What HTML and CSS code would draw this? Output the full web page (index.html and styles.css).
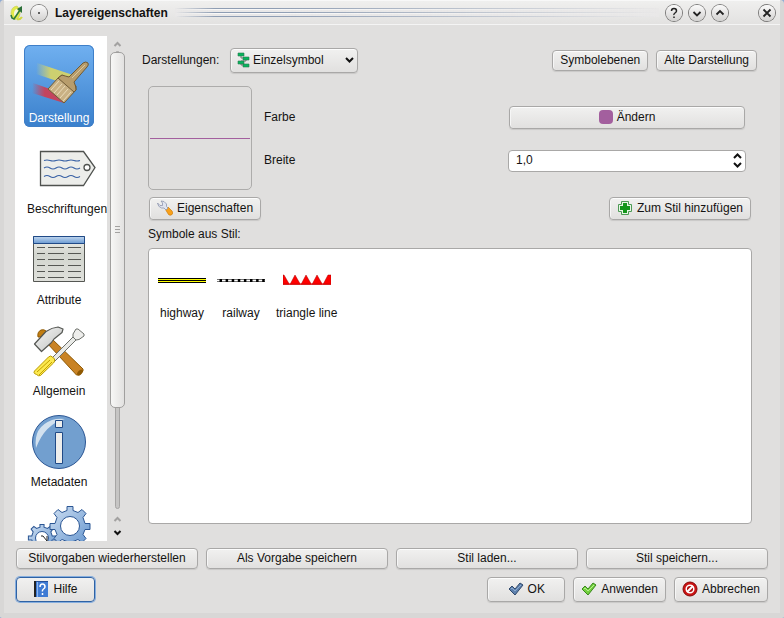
FILE: index.html
```html
<!DOCTYPE html>
<html lang="de">
<head>
<meta charset="utf-8">
<title>Layereigenschaften</title>
<link rel="stylesheet" href="styles.css">
</head>
<body>
<div class="window">
  <header class="titlebar">
    <svg class="app-icon" viewBox="0 0 14 16" aria-hidden="true"><path d="M7 1Q1 2 1 8q0 6 4 6.500Q9 14 10 9q1-5-3-8z" fill="#e3ea4a" stroke="#c3cc58" stroke-width=".600"/><path d="M6.500 4Q4 5 4 8.500q0 3 1.500 3Q8 10 8 7 8 4 6.500 4z" fill="#f4f6e0"/><path d="M7 14q3 1 5-2" fill="none" stroke="#d0d840" stroke-width="2"/><path d="M1 10l1 3 2 1L10 5" fill="none" stroke="#2f7a3c" stroke-width="1.600"/><path d="M7 4l5-3v7z" fill="#2c7038"/></svg>
    <button class="round" aria-label="Fenstermenü"><svg viewBox="0 0 16 16"><circle cx="8" cy="8" r="1" fill="#333"/></svg></button>
    <h1>Layereigenschaften</h1>
    <div class="stripes"></div>
    <button class="round" aria-label="Kontexthilfe"><svg viewBox="0 0 16 16"><path d="M5.500 6q0-2.500 2.500-2.500T10.500 6q0 1-1.500 2T8 10M8 11.500v1.500" fill="none" stroke="#222" stroke-width="1.500"/></svg></button>
    <button class="round" aria-label="Minimieren"><svg viewBox="0 0 16 16"><path d="M4.500 7L8 10.500 11.500 7" fill="none" stroke="#222" stroke-width="1.800"/></svg></button>
    <button class="round" aria-label="Maximieren"><svg viewBox="0 0 16 16"><path d="M4.500 9.500L8 6l3.500 3.500" fill="none" stroke="#222" stroke-width="1.800"/></svg></button>
    <button class="round close" aria-label="Schließen"><svg viewBox="0 0 16 16"><path d="M4.500 4.500l7 7M11.500 4.500l-7 7" fill="none" stroke="#222" stroke-width="1.800"/></svg></button>
  </header>

  <div class="content">
    <nav class="pages">
      <button class="page selected">
        <svg viewBox="27 48 64 64" aria-hidden="true">
          <defs>
            <linearGradient id="yellow"><stop offset="0" stop-color="#d2d26a" stop-opacity="0"/><stop offset=".4" stop-color="#cdd070"/></linearGradient>
            <linearGradient id="red"><stop offset="0" stop-color="#c8405a" stop-opacity="0"/><stop offset=".4" stop-color="#c3445e"/></linearGradient>
          </defs>
          <path d="M37 63l36 12-10 8-27-9z" fill="url(#yellow)"/>
          <path d="M33 83l17 6 14 14-32-10z" fill="url(#red)"/>
          <path d="M58 78l4-3 14 11v4l-12 13-16-14z" fill="#c9b184" stroke="#6f5a35"/>
          <path d="M51 90l8-9M54 93l8-9M57 95l8-9M60 98l8-9M63 101l8-9" stroke="#eadbb9" fill="none"/>
          <path d="M58 78l4-3q3 1 7 2l14-14q3-2 5 0 1 2-1 4L74 82q2 4 2 8l-2 2z" fill="#b89d6c" stroke="#6f5a35"/>
          <path d="M72 78l13-13" stroke="#dcc79b" fill="none"/>
        </svg>
        <span>Darstellung</span>
      </button>
      <button class="page">
        <svg viewBox="36 139 64 64" aria-hidden="true">
          <path d="M41.500 151.500h43l11.500 16-11.500 18h-43z" fill="#ecedea" stroke="#4f524f" stroke-width="1.300"/>
          <circle cx="88" cy="167.500" r="3" fill="#fff" stroke="#4f524f" stroke-width="1.300"/>
          <g fill="none" stroke="#3a62a6" stroke-width="1.200"><path d="M45 160.500q3-1 6 0t6 0 6 0 6 0 6 0 6 0"/><path d="M45 168q3-2 6 0t6 0 6 0 6 0 6 0 6 0"/><path d="M45 176.500q3-2 6 0t6 0 6 0 6 0 6 0 6 0"/></g>
        </svg>
        <span>Beschriftungen</span>
      </button>
      <button class="page">
        <svg viewBox="27 230 64 64" aria-hidden="true">
          <defs><linearGradient id="sheet" x2="0" y2="1"><stop offset="0" stop-color="#eff0ec"/><stop offset=".4" stop-color="#d3d6cf"/><stop offset="1" stop-color="#dfe0db"/></linearGradient><linearGradient id="head" x2="0" y2="1"><stop offset="0" stop-color="#c2d7ee"/><stop offset="1" stop-color="#6a9ad2"/></linearGradient></defs>
          <path d="M33.500 236.500h51v45h-51z" fill="url(#sheet)" stroke="#555753"/>
          <path d="M33.500 236.500h51v7h-51z" fill="url(#head)" stroke="#204a87"/>
          <path d="M37 247.500h8m3 0h16m4 0h13M37 253.500h8m3 0h16m4 0h13M37 259.500h8m3 0h16m4 0h13M37 265.500h8m3 0h16m4 0h13M37 271.500h8m3 0h16m4 0h13M37 277.500h8m3 0h16m4 0h13" stroke="#555753" fill="none"/>
        </svg>
        <span>Attribute</span>
      </button>
      <button class="page">
        <svg viewBox="27 321 64 64" aria-hidden="true">
          <defs><linearGradient id="steel" x2="1" y2="1"><stop offset="0" stop-color="#f6f6f6"/><stop offset="1" stop-color="#bfc1bf"/></linearGradient></defs>
          <path d="M38 337q-1-5 3-7 3-1 5 1l-5 6z" fill="#c17d11" stroke="#8f5902"/>
          <path d="M47 343l29.500 32h3l3.500-4v-2L52 339z" fill="#c98325" stroke="#8f5902"/>
          <ellipse cx="80" cy="372.500" rx="3.500" ry="2" fill="#8f5902" transform="rotate(-45 80 372.500)"/>
          <path d="M34.500 344L46 331.500q6-4 12-4.500l5 2-1 3.500-8 6.500-3 4-9.500 8.500z" fill="url(#steel)" stroke="#555753" stroke-width="1.200" stroke-linejoin="round"/>
          <path d="M52 358l21-21 3 3-21 21z" fill="#e9eae7" stroke="#6d706b"/>
          <path d="M73 337v-3l3-5h2l6 5v2l-5 3.500-3 .500z" fill="#eeeeec" stroke="#6d706b" stroke-linejoin="round"/>
          <path d="M34.500 371l14-14q2-2 4 0l2 2q1 2-1 4l-13 12.500q-2 1-4-1l-2-1q-1-1 0-2.500z" fill="#fce94f" stroke="#b99a00"/>
          <path d="M37 372l13-12M39 375l13-13" stroke="#c4a000" fill="none"/>
        </svg>
        <span>Allgemein</span>
      </button>
      <button class="page">
        <svg viewBox="27 412 64 64" aria-hidden="true">
          <circle cx="59" cy="442" r="26.500" fill="#729fcf" stroke="#2b5694"/>
          <path d="M36 448q-3-21 16-28 6-2 13-1-20 5-29 29z" fill="#e3ecf5" opacity=".85"/>
          <path d="M55.500 420.500h7v7h-7zM55.500 432.500h7v31h-7z" fill="#eeeeec" stroke="#204a87"/>
        </svg>
        <span>Metadaten</span>
      </button>
      <button class="page">
        <svg viewBox="27 503 64 64" aria-hidden="true">
          <defs>
            <linearGradient id="gear" x2="1" y2="1"><stop offset="0" stop-color="#d0e0f2"/><stop offset="1" stop-color="#6394ce"/></linearGradient>
            <path id="cog" d="M-3-16l0-4h6l0 4 5 2 4-3 4 4-3 4 2 6 5 0v6l-5 0-2 5 3 4-4 4-4-3-5 2 0 5h-6l0-5-5-2-4 3-4-4 3-4-2-5-5 0v-6l5 0 2-6-3-4 4-4 4 3z"/>
          </defs>
          <g fill="url(#gear)" stroke="#2b5694"><use href="#cog" transform="translate(42 538) scale(.68)" stroke-width="1.500"/><use href="#cog" transform="translate(70 526.500)"/></g>
          <circle cx="42" cy="538" r="6.500" fill="#fff" stroke="#2b5694"/>
          <circle cx="70" cy="526" r="9.500" fill="#fff" stroke="#2b5694"/>
          <path d="M41 536h2l4 5v-5" fill="none" stroke="#222"/>
        </svg>
      </button>
    </nav>

    <div class="scrollbar" aria-hidden="true">
      <svg viewBox="0 0 9 6"><path d="M1.500 5l3-3 3 3" fill="none" stroke="#a3a2a1" stroke-width="2"/></svg>
      <div class="track"><div class="thumb"><i></i><i></i><i></i></div></div>
      <svg viewBox="0 0 9 6"><path d="M1.500 5l3-3 3 3" fill="none" stroke="#a3a2a1" stroke-width="2"/></svg>
      <svg class="down" viewBox="0 0 9 6"><path d="M1.500 1l3 3 3-3" fill="none" stroke="#111" stroke-width="2"/></svg>
    </div>

    <main>
      <div class="row renderer">
        <label for="renderer">Darstellungen:</label>
        <div class="combo">
          <svg class="i16" viewBox="0 0 16 16" aria-hidden="true"><path d="M5 3v3h5v3H5v4h5" fill="none" stroke="#777"/><path d="M2 1h6v3H2zM7 5h6v3H7zM2 9h6v3H2zM7 12h6v3H7z" fill="#08b45c" stroke="#287a50" stroke-width=".600"/></svg>
          <select id="renderer"><option>Einzelsymbol</option></select>
          <svg class="chevron" viewBox="0 0 9 6" aria-hidden="true"><path d="M1 1l3.500 3.500L8 1" fill="none" stroke="#111" stroke-width="2"/></svg>
        </div>
        <span class="spacer"></span>
        <button class="btn slim">Symbolebenen</button>
        <button class="btn slim">Alte Darstellung</button>
      </div>

      <div class="symbol">
        <div class="preview"><div class="line"></div></div>
        <div class="form">
          <label for="color">Farbe</label>
          <button class="btn" id="color"><span class="swatch"></span>Ändern</button>
          <label for="width">Breite</label>
          <div class="spin">
            <input id="width" type="text" inputmode="decimal" value="1,0">
            <div class="steps">
              <button aria-label="Erhöhen"><svg viewBox="0 0 9 6"><path d="M1 5l3.500-3.500L8 5" fill="none" stroke="#111" stroke-width="2"/></svg></button>
              <button aria-label="Verringern"><svg viewBox="0 0 9 6"><path d="M1 1l3.500 3.500L8 1" fill="none" stroke="#111" stroke-width="2"/></svg></button>
            </div>
          </div>
        </div>
      </div>

      <div class="row actions">
        <button class="btn"><svg class="i16" viewBox="0 0 16 16" aria-hidden="true"><path d="M8.500 9.500l2.500-2.500 4 4q1.500 2 0 3.500-2 1.500-3.500 0z" fill="#f9a11b" stroke="#cf7c0a" stroke-width=".700"/><path d="M4 1l3 .500 2.500 2.500v2.500L11 8 9 10 7 8H4.500Q1 7 .500 3L3 5.500h2.500V3z" fill="#dfe4f0" stroke="#8e96ad" stroke-width=".800"/></svg>Eigenschaften</button>
        <span class="spacer"></span>
        <button class="btn"><svg class="i16" viewBox="0 0 16 16" aria-hidden="true"><path d="M4.500 1.500h7v3h3v7h-3v3h-7v-3h-3v-7h3z" fill="#e8f5e6" stroke="#4d9a55"/><path d="M6 3h4v3h3v4h-3v3H6v-3H3V6h3z" fill="#14961c"/></svg>Zum Stil hinzufügen</button>
      </div>

      <h2>Symbole aus Stil:</h2>
      <ul class="styles">
        <li>
          <svg viewBox="0 0 48 48" aria-hidden="true"><path d="M0 22h48v5H0z" fill="#ffff00"/><path d="M0 22.500h48M0 24.500h48M0 26.500h48" stroke="#000"/></svg>
          <span>highway</span>
        </li>
        <li>
          <svg viewBox="0 0 48 48" aria-hidden="true"><path d="M0 23h48v3H0z" fill="#fff"/><path d="M0 23.500h48M0 25.500h48" stroke="#555" stroke-width=".800"/><path d="M2.500 24.500H48" stroke="#000" stroke-width="3" stroke-dasharray="2.500 3.600"/></svg>
          <span>railway</span>
        </li>
        <li>
          <svg viewBox="0 0 48 48" aria-hidden="true"><path d="M0 28.500V19h1l5.500 9.500zM7 28.500L12 19l5.500 9.500zM18 28.500L23 19l5.500 9.500zM29 28.500L34 19l5.500 9.500zM40 28.500L45 19h3v9.500z" fill="#f00" stroke="#a00" stroke-width=".500"/><path d="M0 28h48" stroke="#d00"/></svg>
          <span>triangle line</span>
        </li>
      </ul>
    </main>
  </div>

  <footer>
    <div class="style-buttons">
      <button class="btn slim">Stilvorgaben wiederherstellen</button>
      <button class="btn slim">Als Vorgabe speichern</button>
      <button class="btn slim">Stil laden...</button>
      <button class="btn slim">Stil speichern...</button>
    </div>
    <div class="row dialog-buttons">
      <button class="btn tall help"><svg class="i16" viewBox="0 0 16 16" aria-hidden="true"><path d="M1 0h2v16H1z" fill="#222"/><path d="M3 0h12v1H3z" fill="#24509a"/><path d="M3 1h12v15H3z" fill="#3f7bd4"/><path d="M4 1h1v15H4z" fill="#8cb7f2"/><path d="M7 6q0-3 2.500-3T12 6q0 1-1.500 2t-1 2.500M9.500 12v2" stroke="#fff" stroke-width="1.500" fill="none"/></svg>Hilfe</button>
      <span class="spacer"></span>
      <button class="btn tall ok"><svg class="i16" viewBox="0 0 16 16" aria-hidden="true"><path d="M1 8l3-3 3 3 5-6 3 2-8 10z" fill="#5d80ad" stroke="#30496b"/><path d="M3 8l1-1 3 3 6-6" fill="none" stroke="#8cabd0"/></svg>OK</button>
      <button class="btn tall"><svg class="i16" viewBox="0 0 16 16" aria-hidden="true"><path d="M1 8l3-3 3 3 5-6 3 2-8 10z" fill="#73cf3e" stroke="#39881c"/><path d="M3 8l1-1 3 3 6-6" fill="none" stroke="#b6f08d"/></svg>Anwenden</button>
      <button class="btn tall"><svg class="i16" viewBox="0 0 16 16" aria-hidden="true"><circle cx="8" cy="8" r="7" fill="#cc1414" stroke="#870808"/><circle cx="8" cy="8" r="3.800" fill="#b01010" stroke="#fff" stroke-width="1.500"/><path d="M5 11l6-6" stroke="#fff" stroke-width="2"/></svg>Abbrechen</button>
    </div>
  </footer>
</div>
</body>
</html>
```
FILE: styles.css
```css
* { box-sizing: border-box; }

body {
  margin: 0;
  background: #8fabd4;
  color: #141312;
  font: 12px/16px "Liberation Sans", Arial, sans-serif;
}

button, input, select { font: inherit; color: inherit; }
button { margin: 0; padding: 0; border: 0; background: none; }
svg { display: block; flex: none; }

.window {
  display: flex;
  flex-direction: column;
  height: 100vh;
  overflow: hidden;
  border: solid #d8d7d6;
  border-width: 0 4px 5px;
  border-radius: 4px 4px 2px 2px;
  background: #e0dfde;
}

.titlebar {
  display: flex;
  align-items: center;
  gap: 7px;
  flex: none;
  height: 25px;
  margin: 0 -4px;
  padding: 0 9px 0 10px;
  background: linear-gradient(#efefee, #e3e2e1);
  border-top: 1px solid #f8f8f8;
  border-bottom: 1px solid #f4f4f4;
  border-radius: 4px 4px 0 0;
  box-shadow: -4px 0 #e8e7e6, 4px 0 #e8e7e6;
}
.app-icon { width: 14px; height: 16px; }
.round {
  width: 16px;
  height: 16px;
  border-radius: 50%;
  background: linear-gradient(#fafafa, #d2d1d0);
  box-shadow: 0 0 0 1px #7c7b7a;
}
.round svg { width: 16px; height: 16px; }
.close { margin-left: 24px; }
h1 { margin: 0 0 0 1px; font-size: 12px; line-height: 16px; }
.stripes {
  flex: 1;
  height: 9px;
  background:
    linear-gradient(90deg, #e9e8e8, transparent 40px, transparent 20%, #e9e8e8),
    repeating-linear-gradient(#8e9db3 0 1px, #f8f8f8 1px 2px, #e9e8e8 2px 4px);
}

.content { display: flex; flex: 1; min-height: 0; padding: 11px 0 0 11px; }

.pages {
  display: flex;
  flex-direction: column;
  align-items: flex-start;
  gap: 9px;
  width: 92px;
  padding: 9px 0 0 9px;
  overflow: hidden;
  background: #fff;
}
.page {
  display: flex;
  flex: none;
  flex-direction: column;
  align-items: center;
  min-width: 70px;
  height: 82px;
  padding: 3px;
  border-radius: 6px;
}
.page svg { width: 64px; height: 64px; }
.page span { line-height: 13px; }
.selected {
  color: #fff;
  background: linear-gradient(#70b0f0, #3a80cc);
  box-shadow: inset 0 0 0 1px #3f7fc8;
}

.scrollbar {
  display: flex;
  flex-direction: column;
  align-items: center;
  width: 15px;
  margin-left: 3px;
  padding: 5px 0;
}
.scrollbar svg { width: 9px; height: 6px; }
.track {
  display: flex;
  flex-direction: column;
  align-items: center;
  flex: 1;
  width: 5px;
  margin: 4px 0 7px;
  border: 1px solid #a6a5a4;
  border-radius: 3px;
  background: #c6c5c4;
}
.thumb {
  display: flex;
  flex-direction: column;
  align-items: center;
  justify-content: center;
  gap: 2px;
  width: 15px;
  height: 78%;
  border: 1px solid #a09f9e;
  border-radius: 5px;
  background: linear-gradient(90deg, #f7f7f6, #e2e1e0);
}
.thumb i { width: 5px; height: 1px; background: #a3a2a1; }
.scrollbar .down { margin-top: 8px; }

main {
  display: flex;
  flex: 1;
  flex-direction: column;
  min-width: 0;
  padding: 12px 28px 17px 23px;
}
.row { display: flex; align-items: center; gap: 8px; }
.spacer { flex: 1; }
.renderer { margin: 0 -5px 0 -6px; }
.renderer label { min-width: 80px; }
label { padding-bottom: 2px; }

.btn, .combo {
  display: flex;
  align-items: center;
  justify-content: center;
  gap: 4px;
  height: 23px;
  padding: 0 7px 2px;
  border: 1px solid #a9a8a7;
  border-radius: 4px;
  background: linear-gradient(#f1f1f0, #e1e0df);
  box-shadow: inset 0 1px #fcfcfc, inset 1px 0 #f6f6f6, 0 1px 1px #c9c8c7;
  white-space: nowrap;
}
.btn.slim { height: 21px; }
.btn.tall { height: 25px; }
.i16 { width: 16px; height: 16px; }

.combo { width: 128px; height: 25px; padding: 0 3px 2px 5px; gap: 1px; }
.combo select {
  flex: 1;
  min-width: 0;
  padding: 0;
  border: 0;
  appearance: none;
  background: none;
}
.chevron { width: 9px; height: 6px; }

.symbol { display: flex; gap: 12px; margin-top: 13px; }
.preview {
  display: flex;
  align-items: center;
  width: 104px;
  height: 104px;
  padding: 1px;
  border: 1px solid #adacab;
  border-radius: 5px;
}
.line { flex: 1; height: 1px; background: #a35f9e; }
.form {
  display: grid;
  flex: 1;
  grid-template-columns: 1fr 1fr;
  grid-auto-rows: 23px;
  gap: 20px 6px;
  align-items: center;
  margin-right: 6px;
  padding-top: 20px;
}
.form .btn { margin: 0 1px; }
.swatch { width: 14px; height: 14px; border-radius: 4px; background: #a35f9e; }
.spin {
  display: flex;
  height: 22px;
  border: 1px solid #a9a8a7;
  border-radius: 4px;
  background: #fff;
}
.spin input {
  flex: 1;
  min-width: 0;
  padding: 0 7px 2px;
  border: 0;
  background: none;
}
.steps { display: flex; flex-direction: column; justify-content: center; gap: 3px; padding-right: 3px; }
.steps button, .steps svg { width: 9px; height: 6px; }

.actions { margin: 7px 1px 0; }
h2 { margin: 6px 0; font-size: 12px; font-weight: normal; line-height: 16px; }

.styles {
  display: flex;
  flex: 1;
  align-items: flex-start;
  gap: 11px;
  margin: 0;
  padding: 7px 9px;
  border: 1px solid #a9a8a7;
  border-radius: 4px;
  background: #fff;
  list-style: none;
}
.styles li { display: flex; flex-direction: column; align-items: center; gap: 1px; min-width: 48px; }
.styles svg { width: 48px; height: 48px; }

footer { flex: none; padding: 7px 12px 11px 12px; }
.style-buttons { display: grid; grid-template-columns: repeat(4, 1fr); gap: 8px; }
.dialog-buttons { margin-top: 8px; }
.help {
  width: 79px;
  border-color: #2f62a4;
  box-shadow: 0 0 0 1px #86aede;
}
.ok { width: 78px; }
```
